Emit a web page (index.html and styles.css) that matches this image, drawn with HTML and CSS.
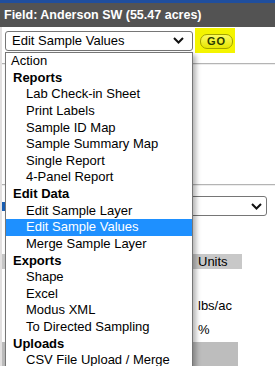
FILE: index.html
```html
<!DOCTYPE html>
<html lang="en">
<head>
    <meta charset="UTF-8">
    <meta content="width=device-width" name="viewport">
    <title>Field actions</title>
    <link rel="stylesheet" href="styles.css">
</head>
<body>
    <div class="topline"></div>
    <div class="field-title">Field: Anderson SW (55.47 acres)</div>
    <div class="page">
        <div class="toolbar">
            <div class="select main">
                <span>Edit Sample Values</span>
                <svg class="chev" width="11" height="7" viewBox="0 0 11 7"><path d="M1 1 L5.5 5.5 L10 1" fill="none" stroke="#111" stroke-width="2"/></svg>
            </div>
            <span class="go-mark"><button class="go">GO</button></span>
        </div>
        <div class="content">
            <div class="rule"></div>
            <div class="blank"></div>
            <div class="rule"></div>
            <div class="depth">
                <span class="lbl"></span>
                <div class="select wide">
                    <span></span>
                    <svg class="chev" width="11" height="7" viewBox="0 0 11 7"><path d="M1 1 L5.5 5.5 L10 1" fill="none" stroke="#111" stroke-width="2"/></svg>
                </div>
            </div>
            <div class="units">
                <div class="head"></div><div class="head">Units</div>
                <div></div><div></div>
                <div></div><div>lbs/ac</div>
                <div></div><div>%</div>
            </div>
            <div class="bar"></div>
        </div>
    </div>

    <ul class="dropdown">
        <li class="action">Action</li>
        <li class="grp">Reports</li>
        <li>Lab Check-in Sheet</li>
        <li>Print Labels</li>
        <li>Sample ID Map</li>
        <li>Sample Summary Map</li>
        <li>Single Report</li>
        <li>4-Panel Report</li>
        <li class="grp">Edit Data</li>
        <li>Edit Sample Layer</li>
        <li class="on">Edit Sample Values</li>
        <li>Merge Sample Layer</li>
        <li class="grp">Exports</li>
        <li>Shape</li>
        <li>Excel</li>
        <li>Modus XML</li>
        <li>To Directed Sampling</li>
        <li class="grp">Uploads</li>
        <li>CSV File Upload / Merge</li>
    </ul>
</body>
</html>
```

FILE: styles.css
```css
* {
    margin: 0;
    padding: 0;
    box-sizing: border-box;
}
body {
    position: relative;
    background-color: #fff;
    color: #000;
    font-family: "Liberation Sans", Arial, sans-serif;
    font-size: 13px;
    overflow: hidden;
}
.topline {
    height: 3px;
    background-color: #1f4e9d;
}
.field-title {
    height: 24px;
    line-height: 24px;
    padding-left: 4px;
    background-color: #535353;
    color: #fff;
    font-weight: bold;
    font-size: 12.5px;
    white-space: nowrap;
}
.page {
    border-left: 2px solid #e2e0e0;
}

.toolbar {
    display: flex;
    align-items: center;
    padding: 1px 0 0 3px;
}
.select {
    display: flex;
    align-items: center;
    justify-content: space-between;
    height: 20px;
    border: 1px solid #767676;
    border-radius: 3px;
    background-color: #fff;
    padding: 0 8px 0 6px;
}
.select.main {
    width: 188px;
}
.go-mark {
    display: flex;
    align-items: flex-start;
    width: 40px;
    height: 25px;
    margin-left: 2px;
    padding: 6px 0 0 5px;
    background-color: #f4f400;
}
.go {
    width: 33px;
    height: 15px;
    border: 1px solid #a3a300;
    border-radius: 7px;
    background: linear-gradient(#fbfb60, #e6e600);
    color: #2c3a00;
    font-family: "Liberation Sans", Arial, sans-serif;
    font-size: 11px;
    font-weight: bold;
    letter-spacing: 1px;
    line-height: 13px;
}

.content {
    padding-top: 10px;
}
.rule {
    height: 2px;
    border-top: 1px solid #b4b4b4;
    border-bottom: 1px solid #ededed;
}
.blank {
    height: 119px;
}
.depth {
    display: flex;
    align-items: center;
    gap: 1px;
    margin-top: 10px;
}
.depth .lbl {
    width: 3px;
    height: 9px;
    background-color: #1a5fb4;
}
.select.wide {
    width: 261px;
    padding-right: 4px;
}
.units {
    display: grid;
    grid-template-columns: 191px 49px;
    grid-template-rows: 15px 24px 24px 24px;
    margin-top: 38px;
    align-items: center;
}
.units .head {
    height: 15px;
    line-height: 15px;
    background-color: #c8c8c8;
}
.units div:nth-child(2n) {
    padding-left: 5px;
}
.bar {
    width: 236px;
    height: 24px;
    margin-top: 1px;
    background-color: #bdbdbd;
}

.dropdown {
    position: absolute;
    left: 5px;
    top: 52px;
    width: 188px;
    height: 318px;
    list-style: none;
    background-color: #fff;
    border: 1px solid #767676;
    box-shadow: 3px 3px 5px rgba(0, 0, 0, 0.3);
}
.dropdown li {
    height: 16.63px;
    line-height: 16.63px;
    padding-left: 20px;
    white-space: nowrap;
}
.dropdown li.action {
    padding-left: 5px;
}
.dropdown li.grp {
    padding-left: 7px;
    font-weight: bold;
}
.dropdown li.on {
    background-color: #1e90ff;
    color: #fff;
}
```
